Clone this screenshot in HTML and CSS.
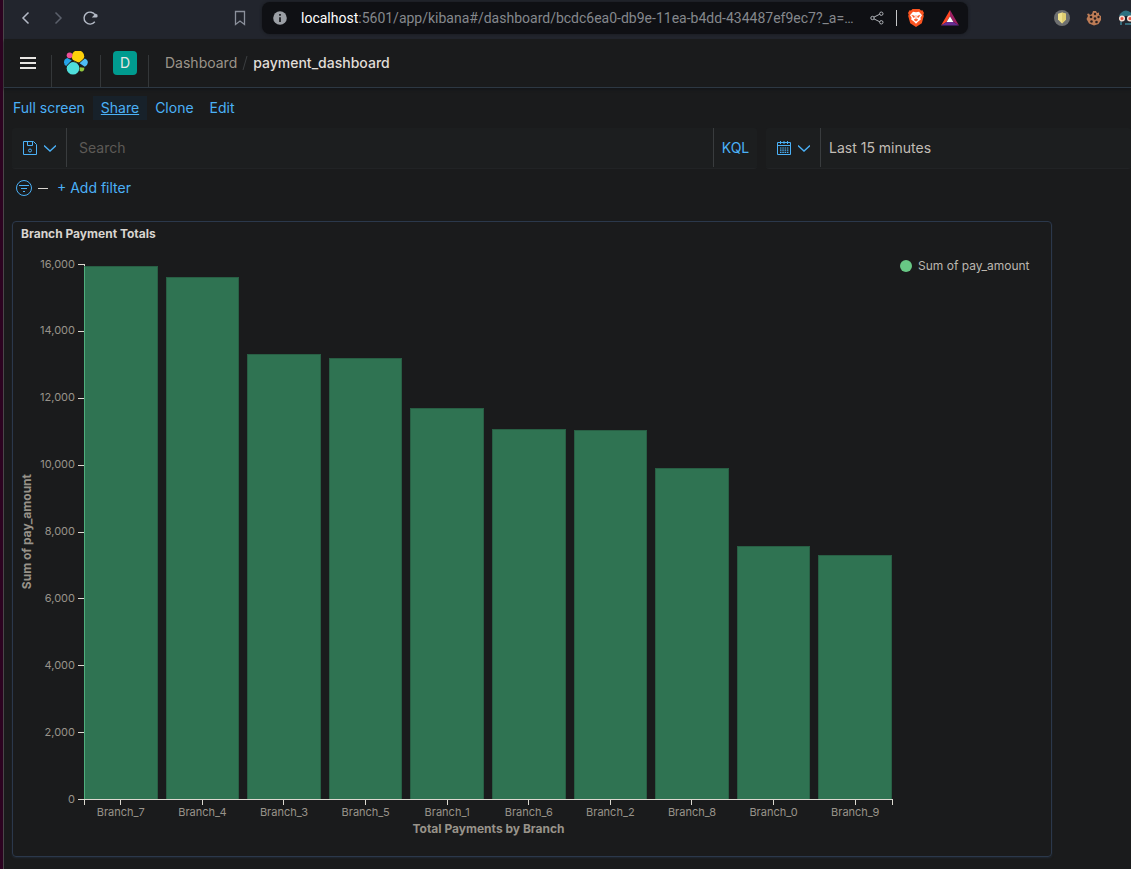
FILE: index.html
```html
<!DOCTYPE html>
<html lang="en">
<head>
<meta charset="utf-8">
<title>payment_dashboard - Kibana</title>
<link rel="stylesheet" href="styles.css">
</head>
<body>
<div class="window">
  <div class="browser-bar">
    <div class="browser-nav">
      <button class="icon-btn" aria-label="Back"><svg width="16" height="16" viewBox="0 0 16 16"><path d="M10.500 2.500 5 8l5.500 5.500" stroke="#b4bac6" stroke-width="1.500"/></svg></button>
      <button class="icon-btn" aria-label="Forward"><svg width="16" height="16" viewBox="0 0 16 16"><path d="M5.500 2.500 11 8l-5.500 5.500" stroke="#5b606b" stroke-width="1.500"/></svg></button>
      <button class="icon-btn" aria-label="Reload"><svg width="16" height="16" viewBox="0 0 16 16"><path d="M12.800 11.800A6 6 0 1 1 13.200 5" stroke="#b4bac6" stroke-width="1.400"/><path d="M9.800 7.500h4.400q1.300 0 1.300-1.200V4.800L13.500 3.500z" fill="#b4bac6"/></svg></button>
    </div>
    <button class="icon-btn bookmark" aria-label="Bookmark"><svg width="16" height="16" viewBox="0 0 16 16"><path d="M3.500 1.500h9v13L8 11l-4.500 3.500z" stroke="#8b909b" stroke-width="1.300"/></svg></button>
    <div class="address">
      <svg width="14" height="14" viewBox="0 0 14 14"><circle cx="7" cy="7" r="6.800" fill="#9b9fa5"/><path d="M7 3v1.800M7 6.200V11" stroke="#101115" stroke-width="1.600"/></svg>
      <span class="url"><b>localhost</b>:5601/app/kibana#/dashboard/bcdc6ea0-db9e-11ea-b4dd-434487ef9ec7?_a=…</span>
      <button class="icon-btn" aria-label="Share page"><svg width="16" height="16" viewBox="0 0 16 16"><path d="M4.800 7.200l6-3M4.800 8.800l6 3" stroke="#b0b3b8"/><circle cx="3.500" cy="8" r="1.700" stroke="#b0b3b8"/><circle cx="12.300" cy="3.700" r="1.700" stroke="#b0b3b8"/><circle cx="12.300" cy="12.300" r="1.700" stroke="#b0b3b8"/></svg></button>
      <span class="address-rule"></span>
      <button class="icon-btn brave" aria-label="Brave Shields"><svg width="16" height="18" viewBox="0 0 16 18"><path d="M4.500 0h7l1.500 1.500 1.500-.2L16 4l-.7 1.500.5 1.500-2 7.200L8 18l-5.800-3.800L.2 7l.5-1.500L0 4l1.500-2.700 1.500.2z" fill="#fb5420"/><path d="M8 3.300 11 2.700l3 3.600-1.600 2.400.4 1.800-2.600 2L8 14.800l-2.200-2.300-2.600-2 .4-1.800L2 6.300l3-3.600z" fill="#fff"/><path d="M3.800 6.200 6.500 7 6 8.800zM12.200 6.200 9.500 7l.5 1.800zM8 6v4M6 10.700l2-.8 2 .8-2 1.500z" fill="#fb5420" stroke="#fb5420" stroke-width=".5"/></svg></button>
      <button class="icon-btn rewards" aria-label="Brave Rewards"><svg width="18" height="16" viewBox="0 0 18 16"><path d="M9 0v6L5.500 12 0 15.500z" fill="#ff4724"/><path d="M9 0v6l3.500 6 5.500 3.500z" fill="#9e1f63"/><path d="M0 15.500 5.500 12h7l5.500 3.500z" fill="#662d91"/><path d="M9 6.300 5.600 12h6.800z" fill="#fff"/></svg></button>
    </div>
    <div class="extensions">
      <svg width="16" height="16" viewBox="0 0 16 16"><circle cx="8" cy="8" r="8" fill="#6d6f70"/><path d="M8 2.500l4 1.200v5.800L8 13.500 4 9.500V3.700z" fill="#f0e28c"/><path d="M8 2.500l4 1.200v5.800L8 13.500z" fill="#e0cf72"/></svg>
      <svg width="16" height="16" viewBox="0 0 16 16"><path d="M7 1h3l1 2 2-.5L13 5l2 1v4l-2.500 4L8 15.500 3 13.500.5 9 2 6 1 4l2-.5L4 5l2-1z" fill="#bd7c56"/><g fill="#2a2020"><circle cx="5" cy="7" r="1.300"/><circle cx="9" cy="4" r="1.200"/><circle cx="9" cy="8.500" r="1.300"/><circle cx="12.500" cy="7" r="1.200"/><circle cx="5.500" cy="11.500" r="1.300"/><circle cx="10.500" cy="12" r="1.300"/></g></svg>
      <svg width="16" height="16" viewBox="0 0 16 16"><path d="M1 6Q3 1 8 0.500q5 .5 7 5.500z" fill="#2d7180"/><path d="M3 11.500v3.500M7 14h6" stroke="#3d8294" stroke-width="1.500"/><circle cx="4" cy="8.500" r="2.300" fill="#e8523f" stroke="#f5ddd2" stroke-width="1.500"/><circle cx="12" cy="8.500" r="2.300" fill="#e8523f" stroke="#f5ddd2" stroke-width="1.500"/></svg>
    </div>
  </div>

  <header class="app-header">
    <div class="header-cell menu-cell"><button class="icon-btn" aria-label="Menu"><svg width="16" height="12" viewBox="0 0 16 12"><path d="M0 1h16M0 6h16M0 11h16" stroke="#e8e6e3" stroke-width="2"/></svg></button></div>
    <div class="header-cell logo-cell"><a class="logo" href="#home" aria-label="Kibana home"><svg width="24" height="24" viewBox="0 0 24 24"><circle cx="14" cy="5.500" r="6.200" fill="#fed10a"/><circle cx="9" cy="17.300" r="6.300" fill="#4fdfdc"/><circle cx="5.600" cy="4.300" r="2.900" fill="#ee4f97"/><path d="M3.300 7Q0 8 0 11.300q0 3 2.300 3.600L7.800 9.500z" fill="#24a3e8"/><path d="M15.200 12 20.800 7.500Q24 8.700 23.800 11.800q-.2 2.800-3 3.900z" fill="#4ebdf5"/><path d="M15.800 16.200l4.500.6q.3 3.200-2.200 3.600-1.500.2-2.500-.7z" fill="#93c83e"/><path d="M8 9l7 3.200 5.200-4.700M2.500 15.100l5.300-5.200M15 12.700l1 2.900" stroke="#1a1b1c" stroke-width=".9"/></svg></a></div>
    <div class="header-cell"><button class="space-btn">D</button></div>
    <nav class="breadcrumbs" aria-label="Breadcrumb"><a href="#dashboards">Dashboard</a><svg width="8" height="16" viewBox="0 0 8 16"><path d="M6 1 2 15" stroke="#3b3e40"/></svg><strong>payment_dashboard</strong></nav>
  </header>

  <nav class="toolbar" aria-label="Dashboard actions">
    <a href="#fullscreen">Full screen</a>
    <a class="active" href="#share">Share</a>
    <a href="#clone">Clone</a>
    <a href="#edit">Edit</a>
  </nav>

  <div class="query-row">
    <div class="field query">
      <button class="prefix" aria-label="Saved queries">
        <svg width="16" height="16" viewBox="0 0 16 16"><path d="M1.500 1.500h10l3 3v10h-13zM5.500 1.500v4h5v-4" stroke="#4bb1f7"/><circle cx="8" cy="10.500" r="1.500" stroke="#4bb1f7"/></svg>
        <svg width="12" height="12" viewBox="0 0 12 12"><path d="M0 3.500 6 9l6-5.500" stroke="#4bb1f7" stroke-width="1.300"/></svg>
      </button>
      <input class="search" type="text" placeholder="Search" aria-label="Search">
      <button class="kql">KQL</button>
    </div>
    <div class="field date">
      <button class="prefix" aria-label="Date quick select">
        <svg width="16" height="16" viewBox="0 0 16 16"><path d="M1.500 2.500h13v12h-13zM1.500 5.500h13M4.500 1v3M8 1v3M11.500 1v3" stroke="#4bb1f7"/><path d="M4 8h8.500M4 10.200h8.500M4 12.300h8.500" stroke="#4bb1f7" stroke-width="1.200" stroke-dasharray="1.500 .8"/></svg>
        <svg width="12" height="12" viewBox="0 0 12 12"><path d="M0 3.500 6 9l6-5.500" stroke="#4bb1f7" stroke-width="1.300"/></svg>
      </button>
      <button class="range">Last 15 minutes</button>
    </div>
  </div>

  <div class="filter-row">
    <button class="icon-btn" aria-label="Filter options"><svg width="16" height="16" viewBox="0 0 16 16"><circle cx="8" cy="8" r="7.500" stroke="#4bb1f7"/><path d="M3 5.500h10M5 8.500h6M7 11.500h2" stroke="#4bb1f7"/></svg></button>
    <span class="dash"></span>
    <button class="add-filter">+ Add filter</button>
  </div>

  <main class="panel">
    <h2 class="panel-title">Branch Payment Totals</h2>
    <div class="chart">
      <div class="y-title"><span>Sum of pay_amount</span></div>
      <div class="y-axis">
        <div class="tick"><span>16,000</span></div>
        <div class="tick"><span>14,000</span></div>
        <div class="tick"><span>12,000</span></div>
        <div class="tick"><span>10,000</span></div>
        <div class="tick"><span>8,000</span></div>
        <div class="tick"><span>6,000</span></div>
        <div class="tick"><span>4,000</span></div>
        <div class="tick"><span>2,000</span></div>
        <div class="tick"><span>0</span></div>
      </div>
      <div class="plot">
        <div class="bar" style="height:99.600%"></div>
        <div class="bar" style="height:97.600%"></div>
        <div class="bar" style="height:83.200%"></div>
        <div class="bar" style="height:82.400%"></div>
        <div class="bar" style="height:73%"></div>
        <div class="bar" style="height:69.100%"></div>
        <div class="bar" style="height:69%"></div>
        <div class="bar" style="height:61.800%"></div>
        <div class="bar" style="height:47.200%"></div>
        <div class="bar" style="height:45.700%"></div>
      </div>
      <div class="legend"><span class="dot"></span><span>Sum of pay_amount</span></div>
      <div class="x-axis">
        <span>Branch_7</span><span>Branch_4</span><span>Branch_3</span><span>Branch_5</span><span>Branch_1</span><span>Branch_6</span><span>Branch_2</span><span>Branch_8</span><span>Branch_0</span><span>Branch_9</span>
      </div>
      <div class="x-title">Total Payments by Branch</div>
    </div>
  </main>
</div>
</body>
</html>
```
FILE: styles.css
```css
* { box-sizing: border-box; }

body {
  margin: 0;
  background: #1a1b1c;
  color: #d8d4cf;
  font: 14px/20px Inter, "Liberation Sans", sans-serif;
}

button, input {
  margin: 0;
  padding: 0;
  border: 0;
  background: none;
  color: inherit;
  font: inherit;
}

a { color: inherit; text-decoration: none; }
svg { display: block; flex: none; fill: none; }

.window {
  display: flex;
  flex-direction: column;
  min-height: 100vh;
  border-left: 1px solid #4a4548;
  margin-left: 3px;
  outline: 3px solid #2c0320;
}

.icon-btn { display: flex; align-items: center; justify-content: center; }

/* Browser toolbar */
.browser-bar {
  display: flex;
  align-items: center;
  height: 39px;
  padding-bottom: 3px;
  background: #22252d;
  overflow: hidden;
}
.browser-nav { display: flex; gap: 16px; padding-left: 14px; }
.bookmark { margin-left: 134px; }
.address {
  display: flex;
  align-items: center;
  flex: 1;
  min-width: 0;
  height: 32px;
  margin-left: 14px;
  padding: 0 9px 0 11px;
  border-radius: 8px;
  background: #0f1014;
  box-shadow: 0 0 3px #15171c;
}
.url {
  flex: 1;
  min-width: 0;
  margin-left: 14px;
  overflow: hidden;
  white-space: nowrap;
  color: #85888d;
  font: 14px/20px Roboto, "Open Sans", sans-serif;
}
.url b { color: #fff; font-weight: 400; }
.address-rule { width: 1px; height: 16px; margin: 0 11px; background: #c5c6c8; }
.rewards { margin-left: 17px; }
.extensions { display: flex; flex: none; gap: 16px; width: 77px; margin-left: 86px; }

/* Application header */
.app-header {
  display: flex;
  height: 49px;
  border-bottom: 1px solid #2d3843;
  box-shadow: 0 2px 2px #15171a;
}
.header-cell {
  display: flex;
  justify-content: center;
  width: 48px;
  padding-top: 12px;
  background: linear-gradient(#343739, #343739) right bottom / 1px 32px no-repeat;
}
.menu-cell { align-items: center; padding: 0; }
.logo-cell { width: 49px; padding-right: 2px; }
.logo { display: block; }
.space-btn {
  width: 24px;
  height: 24px;
  border-radius: 4px;
  background: #009b8f;
  color: #e8e6e3;
}
.breadcrumbs {
  display: flex;
  align-items: center;
  gap: 4px;
  padding-left: 16px;
  color: #9b948a;
}
.breadcrumbs strong { color: #e0ddd8; font-weight: 500; }

/* Dashboard actions */
.toolbar {
  display: flex;
  height: 40px;
  padding: 8px 0 0 1px;
  color: #4bb1f7;
}
.toolbar a { height: 24px; padding: 2px 8px; }
.toolbar .active { background: #17212a; text-decoration: underline; }

/* Query bar */
.query-row { display: flex; gap: 9px; padding-left: 8px; }
.field {
  display: flex;
  height: 41px;
  padding-bottom: 1px;
  border-bottom: 1px solid #212325;
  border-radius: 3px;
  background: #1c1e1f;
}
.query { flex: 1; min-width: 0; }
.date { flex: 0 1 365px; }
.prefix {
  display: flex;
  align-items: center;
  gap: 6px;
  width: 55px;
  padding-left: 10px;
  border-right: 1px solid #393c3e;
}
.search { flex: 1; min-width: 0; padding: 0 12px; outline: none; }
.search::placeholder { color: #5d5a56; opacity: 1; }
.kql { width: 44px; border-left: 1px solid #393c3e; color: #4bb1f7; }
.range { padding-left: 8px; color: #c2bdb5; }

/* Filters */
.filter-row { display: flex; align-items: center; height: 38px; padding-left: 12px; }
.dash { width: 10px; height: 1px; margin: 0 9px 0 6px; background: #d8d4cf; }
.add-filter { color: #4bb1f7; }

/* Visualization panel */
.panel {
  display: flex;
  flex-direction: column;
  flex: 1;
  margin: 14px 79px 12px 8px;
  border: 1px solid #2b384b;
  border-radius: 4px;
  box-shadow: 0 1px 2px #202833;
}
.panel-title {
  margin: 0;
  padding: 2px 8px;
  font-size: 12px;
  line-height: 20px;
  font-weight: 700;
}
.chart {
  display: grid;
  grid-template-columns: 24px 47px 1fr 158px;
  grid-template-rows: minmax(240px, 1fr) 21px 16px;
  flex: 1;
  padding: 18px 0 19px;
  color: #98938a;
  font-size: 11px;
  line-height: 14px;
}
.y-title {
  display: flex;
  align-items: center;
  justify-content: center;
  padding-left: 4px;
}
.y-title span {
  writing-mode: vertical-rl;
  rotate: 180deg;
  font-size: 12px;
  font-weight: 700;
}
.y-axis { display: flex; flex-direction: column; justify-content: space-between; }
.tick {
  display: flex;
  align-items: center;
  justify-content: flex-end;
  gap: 3px;
  height: 1px;
}
.tick span { padding-bottom: 2px; }
.tick::after { content: ""; width: 6px; height: 1px; background: #dcd9d0; }
.plot {
  display: flex;
  align-items: flex-end;
  gap: 8px;
  padding-right: 1px;
  border-bottom: 1px solid #dcd9d0;
  background: linear-gradient(#dcd9d0, #dcd9d0) left top / 1px 100% no-repeat;
}
.bar { flex: 1; border: 1px solid #285f44; border-bottom: 0; background: #2f7352; }
.bar:first-child { border-left-color: #4fae7d; }
.legend {
  display: flex;
  gap: 6px;
  height: 4px;
  padding-left: 7px;
  align-items: center;
  color: #bcb7af;
  font-size: 12px;
}
.dot { flex: none; width: 12px; height: 12px; border-radius: 50%; background: #68c885; }
.x-axis {
  display: flex;
  grid-column: 3;
  gap: 8px;
  padding-right: 1px;
  background:
    linear-gradient(#dcd9d0, #dcd9d0) left top / 1px 5px no-repeat,
    linear-gradient(#dcd9d0, #dcd9d0) right top / 1px 5px no-repeat;
}
.x-axis span {
  flex: 1;
  padding-top: 5px;
  text-align: center;
  background: linear-gradient(#dcd9d0, #dcd9d0) center top / 1px 5px no-repeat;
}
.x-title {
  grid-column: 3;
  text-align: center;
  font-size: 12px;
  line-height: 16px;
  font-weight: 700;
}
```
